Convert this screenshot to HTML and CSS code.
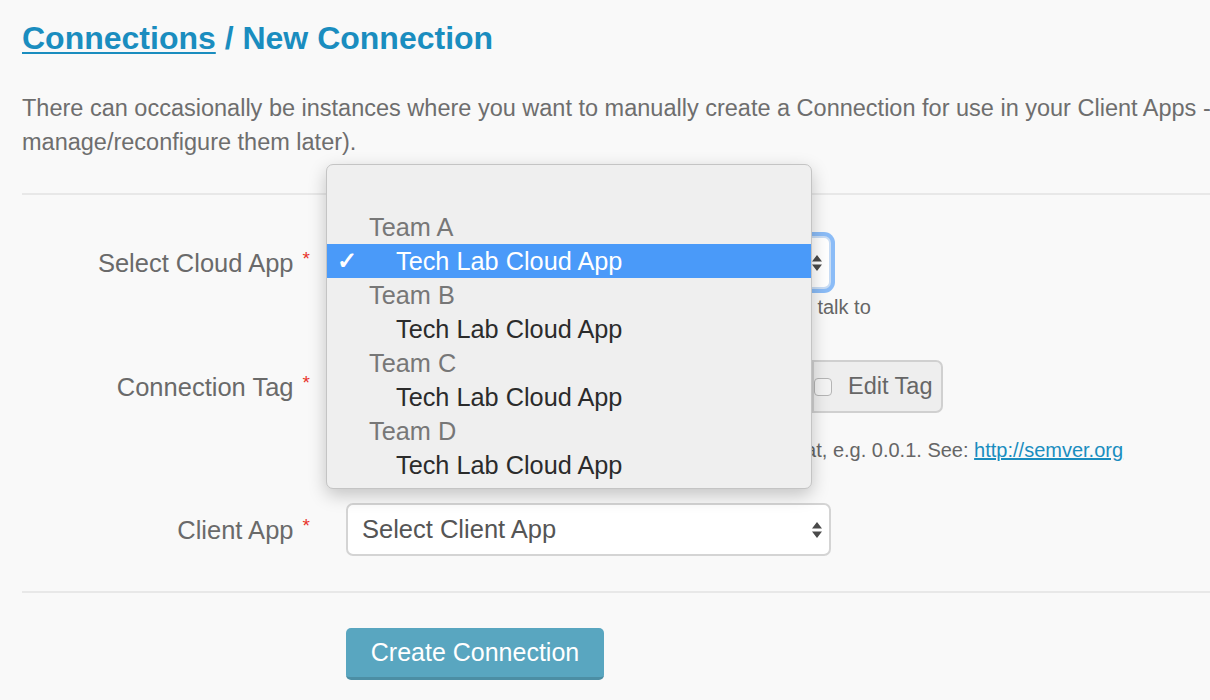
FILE: index.html
```html
<!DOCTYPE html>
<html>
<head>
<meta charset="utf-8">
<title>New Connection</title>
<link rel="stylesheet" href="styles.css">
</head>
<body>
<div class="page">
  <h1 class="title"><a href="#" class="crumb">Connections</a> / New Connection</h1>
  <p class="intro">There can occasionally be instances where you want to manually create a Connection for use in your Client Apps - (you can<br>manage/reconfigure them later).</p>
  <hr class="rule">
  <form class="form">
    <div class="row row-cloud">
      <label class="label">Select Cloud App <span class="req">*</span></label>
      <div class="field">
        <div class="select select-focus">
          <span class="select-text">Tech Lab Cloud App</span>
          <svg class="arrows" width="12" height="18" viewBox="0 0 12 18"><path d="M6 1 L11 7.5 L1 7.5 Z M1 10.5 L11 10.5 L6 17 Z" fill="#4a4a4a"/></svg>
        </div>
        <div class="help">Select the Cloud App that this new Client App should talk to</div>
      </div>
    </div>
    <div class="row row-tag">
      <label class="label">Connection Tag <span class="req">*</span></label>
      <div class="field">
        <div class="input-group">
          <div class="input">0.0.1</div>
          <div class="addon"><span class="checkbox"></span><span class="addon-text">Edit Tag</span></div>
        </div>
        <div class="help">Connection tags must use semantic versioning format, e.g. 0.0.1. See: <a href="#" class="link">http://semver.org</a></div>
      </div>
    </div>
    <div class="row row-client">
      <label class="label">Client App <span class="req">*</span></label>
      <div class="field">
        <div class="select">
          <span class="select-text">Select Client App</span>
          <svg class="arrows" width="12" height="18" viewBox="0 0 12 18"><path d="M6 1 L11 7.5 L1 7.5 Z M1 10.5 L11 10.5 L6 17 Z" fill="#4a4a4a"/></svg>
        </div>
      </div>
    </div>
    <hr class="rule rule-bottom">
    <div class="actions">
      <button type="button" class="btn">Create Connection</button>
    </div>
  </form>

  <div class="menu">
    <div class="menu-item blank"></div>
    <div class="menu-item group">Team A</div>
    <div class="menu-item option selected"><span class="check">✓</span>Tech Lab Cloud App</div>
    <div class="menu-item group">Team B</div>
    <div class="menu-item option">Tech Lab Cloud App</div>
    <div class="menu-item group">Team C</div>
    <div class="menu-item option">Tech Lab Cloud App</div>
    <div class="menu-item group">Team D</div>
    <div class="menu-item option">Tech Lab Cloud App</div>
  </div>
</div>
</body>
</html>
```

FILE: styles.css
```css
html, body {
  margin: 0;
  padding: 0;
  background: #f9f9f9;
  overflow: hidden;
}
body {
  font-family: "Liberation Sans", Arial, sans-serif;
  color: #666;
  width: 1210px;
  height: 700px;
}
.page {
  position: relative;
  width: 1400px;
  padding-left: 22px;
}
.title {
  margin: 0;
  padding-top: 20px;
  font-size: 32px;
  line-height: 36px;
  font-weight: bold;
  color: #1a8dbf;
}
.crumb {
  color: #1a8dbf;
  text-decoration: underline;
  text-decoration-thickness: 2px;
  text-underline-offset: 3px;
}
.intro {
  margin: 35px 0 0 0;
  font-size: 23.5px;
  line-height: 34px;
  color: #6e6e6e;
  white-space: nowrap;
}
.rule {
  border: 0;
  border-top: 2px solid #e8e8e8;
  margin: 34px 0 0 0;
}
.form {
  margin: 0;
}
.row {
  display: grid;
  grid-template-columns: 324px 1fr;
}
.row-cloud { margin-top: 41px; }
.row-tag { margin-top: 42px; }
.row-client { margin-top: 42px; }
.label {
  text-align: right;
  padding-right: 36px;
  font-size: 25.5px;
  color: #6a6a6a;
  line-height: 46px;
}
.req {
  color: #e8342a;
  font-size: 19px;
  vertical-align: 7px;
  margin-left: 2px;
}
.field {
  display: flex;
  flex-direction: column;
  align-items: flex-start;
}
.select {
  box-sizing: border-box;
  width: 485px;
  height: 53px;
  background: #fff;
  border: 2px solid #d4d4d4;
  border-radius: 7px;
  display: flex;
  align-items: center;
  justify-content: space-between;
  padding: 0 6px 0 14px;
  font-size: 25.5px;
  color: #555;
}
.select-focus {
  box-shadow: 0 0 0 4px #8bbcf7;
  border-color: #c9ddf5;
}
.arrows {
  display: block;
}
.help {
  margin-top: 7px;
  font-size: 20px;
  line-height: 22px;
  color: #666;
  white-space: nowrap;
}
.row-tag .help { margin-top: 26px; }
.input-group {
  display: flex;
  height: 53px;
}
.input {
  box-sizing: border-box;
  width: 466px;
  height: 53px;
  background: #fff;
  border: 2px solid #d4d4d4;
  border-right: 0;
  border-radius: 7px 0 0 7px;
  padding: 0 14px;
  font-size: 25.5px;
  line-height: 49px;
  color: #555;
}
.addon {
  box-sizing: border-box;
  display: flex;
  align-items: center;
  gap: 16px;
  height: 53px;
  padding: 0 8px 0 0;
  background: #eeeeee;
  border: 2px solid #d0d0d0;
  border-radius: 0 7px 7px 0;
  font-size: 23.5px;
  color: #666;
}
.checkbox {
  display: block;
  width: 16px;
  height: 16px;
  border: 1px solid #b5b5b5;
  border-radius: 4px;
  background: #f4f4f4;
}
.link {
  color: #1a8dbf;
}
.rule-bottom {
  margin-top: 35px;
}
.actions {
  padding-left: 324px;
  margin-top: 35px;
}
.btn {
  box-sizing: border-box;
  width: 258px;
  height: 52px;
  border: 0;
  border-bottom: 3px solid #4c8ea4;
  border-radius: 5px;
  background: #59a6c0;
  color: #fff;
  font-family: "Liberation Sans", Arial, sans-serif;
  font-size: 25px;
  padding: 0;
}
.menu {
  position: absolute;
  left: 326px;
  top: 164px;
  width: 486px;
  box-sizing: border-box;
  padding: 11px 0 6px 0;
  background: #efefef;
  border: 1px solid #c4c4c4;
  border-radius: 7px;
  box-shadow: 0 6px 18px rgba(0,0,0,0.22);
}
.menu-item {
  height: 34px;
  line-height: 34px;
  font-size: 25.3px;
  white-space: nowrap;
  position: relative;
}
.group {
  padding-left: 42px;
  color: #777;
}
.option {
  padding-left: 69px;
  color: #2b2b2b;
}
.selected {
  background: #4a9af9;
  color: #fff;
}
.check {
  position: absolute;
  left: 10px;
  top: 0;
  font-weight: bold;
  font-size: 24px;
}
```
